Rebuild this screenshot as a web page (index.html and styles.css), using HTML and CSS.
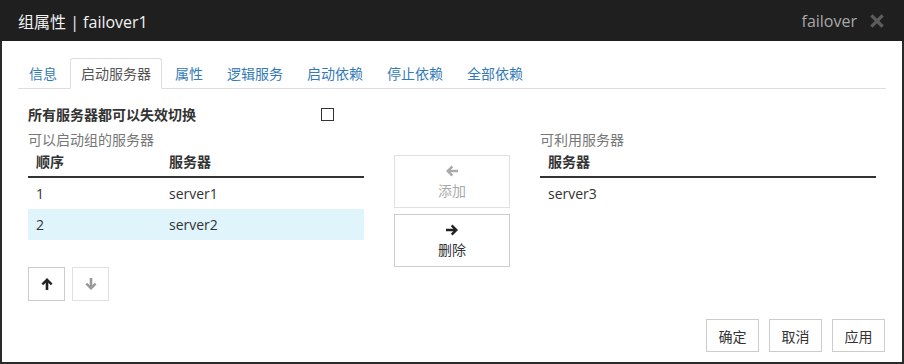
FILE: index.html
```html
<!DOCTYPE html>
<html lang="zh-CN">
<head>
  <meta charset="UTF-8">
  <title>组属性 | failover1</title>
  <link rel="stylesheet" href="styles.css">
</head>
<body>

  <div class="dialog">
    <div class="dialog-header">
      <span class="dialog-title">组属性 | failover1</span>
      <span class="dialog-tools">
        <span class="group-name">failover</span>
        <svg class="close" width="14" height="14" viewBox="0 0 14 14">
          <path d="M2.5 2.5 L11.5 11.5 M11.5 2.5 L2.5 11.5" stroke="#5c5c5c" stroke-width="3.2" stroke-linecap="square"/>
        </svg>
      </span>
    </div>

    <div class="dialog-body">
      <ul class="tabs">
        <li class="tab">信息</li>
        <li class="tab active">启动服务器</li>
        <li class="tab">属性</li>
        <li class="tab">逻辑服务</li>
        <li class="tab">启动依赖</li>
        <li class="tab">停止依赖</li>
        <li class="tab">全部依赖</li>
      </ul>

      <div class="tab-content">
        <div class="check-row">
          <span class="check-label">所有服务器都可以失效切换</span>
          <span class="checkbox"></span>
        </div>

        <div class="columns">
          <div class="col">
            <div class="caption">可以启动组的服务器</div>
            <table class="list">
              <thead>
                <tr><th class="col-order">顺序</th><th>服务器</th></tr>
              </thead>
              <tbody>
                <tr><td>1</td><td>server1</td></tr>
                <tr class="selected"><td>2</td><td>server2</td></tr>
              </tbody>
            </table>
            <div class="order-buttons">
              <button class="btn icon-btn">
                <svg width="12" height="14" viewBox="0 0 12 14"><path d="M6 1 L11.5 6.5 L9.8 8.2 L7.3 5.7 L7.3 13 L4.7 13 L4.7 5.7 L2.2 8.2 L0.5 6.5 Z" fill="#222"/></svg>
              </button>
              <button class="btn icon-btn disabled">
                <svg width="12" height="14" viewBox="0 0 12 14"><path d="M6 13 L11.5 7.5 L9.8 5.8 L7.3 8.3 L7.3 1 L4.7 1 L4.7 8.3 L2.2 5.8 L0.5 7.5 Z" fill="#999"/></svg>
              </button>
            </div>
          </div>

          <div class="move-buttons">
            <button class="btn move-btn disabled">
              <svg width="14" height="12" viewBox="0 0 14 12"><path d="M1 6 L6.5 0.5 L8.2 2.2 L5.7 4.7 L13 4.7 L13 7.3 L5.7 7.3 L8.2 9.8 L6.5 11.5 Z" fill="#aaa"/></svg>
              <span>添加</span>
            </button>
            <button class="btn move-btn">
              <svg width="14" height="12" viewBox="0 0 14 12"><path d="M13 6 L7.5 0.5 L5.8 2.2 L8.3 4.7 L1 4.7 L1 7.3 L8.3 7.3 L5.8 9.8 L7.5 11.5 Z" fill="#222"/></svg>
              <span>删除</span>
            </button>
          </div>

          <div class="col">
            <div class="caption">可利用服务器</div>
            <table class="list">
              <thead>
                <tr><th>服务器</th></tr>
              </thead>
              <tbody>
                <tr><td>server3</td></tr>
              </tbody>
            </table>
          </div>
        </div>
      </div>

      <div class="dialog-footer">
        <button class="btn footer-btn">确定</button>
        <button class="btn footer-btn">取消</button>
        <button class="btn footer-btn">应用</button>
      </div>
    </div>
  </div>

</body>
</html>
```

FILE: styles.css
```css
:root {
  --header-bg: #1f1f1f;
  --frame: #2a2a2a;
  --text: #333333;
  --muted: #777777;
  --link: #337ab7;
  --line: #dddddd;
  --selected: #dff4fb;
}
* {
  box-sizing: border-box;
  margin: 0;
  padding: 0;
}
body {
  font-family: "Open Sans", "Noto Sans CJK SC", sans-serif;
  font-size: 14px;
  color: var(--text);
  background: #ffffff;
}
.dialog {
  width: 904px;
  height: 364px;
  border: 2px solid var(--frame);
  border-top: 0;
  display: flex;
  flex-direction: column;
  background: #ffffff;
}
.dialog-header {
  height: 41px;
  background: var(--header-bg);
  margin: 0 -2px;
  padding: 0 20px 0 18px;
  display: flex;
  align-items: center;
  justify-content: space-between;
}
.dialog-title {
  color: #f2f2f2;
  font-size: 16px;
}
.dialog-tools {
  display: flex;
  align-items: center;
  gap: 13px;
}
.group-name {
  color: #a8a8a8;
  font-size: 16px;
}
.close {
  display: block;
}
.dialog-body {
  flex: 1;
  display: flex;
  flex-direction: column;
  padding: 17px 16px 10px 16px;
}
.tabs {
  list-style: none;
  display: flex;
  height: 31px;
  border-bottom: 1px solid var(--line);
}
.tab {
  height: 31px;
  line-height: 29px;
  padding: 0 10px;
  margin-right: 2px;
  border: 1px solid transparent;
  border-radius: 3px 3px 0 0;
  color: var(--link);
}
.tab.active {
  color: #555555;
  border-color: var(--line) var(--line) #ffffff;
  background: #ffffff;
}
.tab-content {
  padding: 0 10px;
}
.check-row {
  display: flex;
  align-items: center;
  margin-top: 15px;
  height: 20px;
}
.check-label {
  width: 293px;
  font-weight: bold;
}
.checkbox {
  width: 13px;
  height: 13px;
  border: 1px solid #333333;
  background: #ffffff;
}
.columns {
  display: flex;
  justify-content: space-between;
  margin-top: 7px;
}
.col {
  width: 336px;
}
.caption {
  color: var(--muted);
  line-height: 18px;
}
.list {
  width: 100%;
  border-collapse: collapse;
}
.list th {
  text-align: left;
  font-weight: bold;
  padding: 4px 8px 5px;
  line-height: 18px;
  border-bottom: 2px solid #333333;
}
.list th.col-order {
  width: 133px;
}
.list td {
  padding: 6px 8px;
  line-height: 19px;
}
.list tr.selected td {
  background: var(--selected);
}
.order-buttons {
  display: flex;
  gap: 7px;
  margin-top: 27px;
}
.btn {
  font-family: inherit;
  font-size: 14px;
  color: var(--text);
  background: #ffffff;
  border: 1px solid #cccccc;
  display: flex;
  align-items: center;
  justify-content: center;
}
.btn.disabled {
  border-color: #e0e0e0;
  color: #aaaaaa;
}
.icon-btn {
  width: 37px;
  height: 34px;
}
.move-buttons {
  width: 116px;
  margin-top: 24px;
  display: flex;
  flex-direction: column;
  gap: 6px;
}
.move-btn {
  height: 53px;
  flex-direction: column;
  gap: 3px;
  padding-top: 2px;
}
.dialog-footer {
  margin-top: auto;
  display: flex;
  justify-content: flex-end;
  gap: 10px;
  padding-right: 1px;
}
.footer-btn {
  width: 53px;
  height: 33px;
}
```
